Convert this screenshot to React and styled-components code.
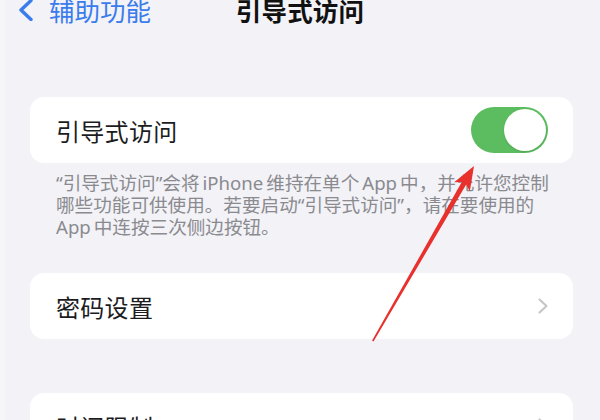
import React from "react";
import styled, { createGlobalStyle } from "styled-components";

const GlobalStyle = createGlobalStyle`
  html, body {
    margin: 0;
    padding: 0;
    background: #f2f2f7;
    overflow: hidden;
  }
  body {
    font-family: "Noto Sans", "Noto Sans CJK SC", sans-serif;
    -webkit-font-smoothing: antialiased;
  }
`;

const Screen = styled.div`
  position: relative;
  width: 600px;
  height: 420px;
  overflow: hidden;
  background: #f2f2f7;
  border-left: 5px solid #f6f6f9;
  box-sizing: border-box;
`;

const NavBar = styled.div`
  display: grid;
  grid-template-columns: 1fr auto 1fr;
  align-items: center;
  height: 22px;
  margin: -3px 0 3px -5px;
  padding: 0 18px;
  font-family: "Noto Sans CJK SC", sans-serif;
  font-size: 25.5px;
  line-height: 1;
`;

const BackLink = styled.a`
  display: flex;
  align-items: center;
  gap: 15px;
  color: #3a7cec;
  text-decoration: none;
  svg {
    flex: none;
  }
`;

const Title = styled.div`
  font-weight: 700;
  color: #111;
  letter-spacing: 0.2px;
`;

const Content = styled.div`
  display: flex;
  flex-direction: column;
  padding: 75px 27px 0 25px;
`;

const Card = styled.div`
  display: flex;
  align-items: center;
  justify-content: space-between;
  height: 66px;
  flex: none;
  padding: 0 25px 0 26px;
  margin-top: ${(p) => p.$gap || 0}px;
  background: #fff;
  border-radius: 14px;
`;

const Label = styled.span`
  font-family: "Noto Sans CJK SC", sans-serif;
  font-size: 24px;
  letter-spacing: 0.3px;
  color: #1c1c1e;
`;

const Switch = styled.span`
  position: relative;
  width: 77px;
  height: 46px;
  border-radius: 23px;
  background: ${(p) => (p.$on ? "#5bbd5f" : "#e5e5ea")};
  &::after {
    content: "";
    position: absolute;
    top: 2px;
    left: ${(p) => (p.$on ? "33px" : "2px")};
    width: 42px;
    height: 42px;
    border-radius: 50%;
    background: #fff;
    box-shadow: 0 1px 2px rgba(0, 0, 0, 0.12);
  }
`;

const Footnote = styled.p`
  margin: 9px 0 0;
  padding: 0 0 0 26px;
  font-size: 18.6px;
  line-height: 22px;
  color: #8a8a8f;
`;

const Line = styled.span`
  display: block;
  white-space: nowrap;
`;

// Latin words inside Chinese text get a little air on both sides
const Latin = styled.span`
  margin: 0 3px;
  ${(p) => p.$lead && "margin-left: 0;"}
`;

const Arrow = styled.svg`
  position: absolute;
  left: -5px;
  top: 0;
  pointer-events: none;
`;

function BackChevron() {
  return (
    <svg width="16" height="22" viewBox="0 0 16 22">
      <path
        d="M13 1.5 L3 11 L13 20.5"
        fill="none"
        stroke="#3a7cec"
        strokeWidth="3.4"
        strokeLinecap="round"
        strokeLinejoin="round"
      />
    </svg>
  );
}

function Disclosure() {
  return (
    <svg width="10" height="16" viewBox="0 0 10 16">
      <path
        d="M1.5 1.5 L8.5 8 L1.5 14.5"
        fill="none"
        stroke="#c4c4c8"
        strokeWidth="2"
        strokeLinecap="round"
        strokeLinejoin="round"
      />
    </svg>
  );
}

export default function App() {
  return (
    <>
      <GlobalStyle />
      <Screen>
        <NavBar>
          <BackLink href="#">
            <BackChevron />
            辅助功能
          </BackLink>
          <Title>引导式访问</Title>
          <span />
        </NavBar>

        <Content>
          <Card>
            <Label>引导式访问</Label>
            <Switch $on />
          </Card>
          <Footnote>
            <Line>
              “引导式访问”会将<Latin>iPhone</Latin>维持在单个<Latin>App</Latin>中，并允许您控制
            </Line>
            <Line>哪些功能可供使用。若要启动“引导式访问”，请在要使用的</Line>
            <Line>
              <Latin $lead>App</Latin>中连按三次侧边按钮。
            </Line>
          </Footnote>

          <Card $gap={35}>
            <Label>密码设置</Label>
            <Disclosure />
          </Card>

          <Card $gap={54}>
            <Label>时间限制</Label>
            <Disclosure />
          </Card>
        </Content>

        {/* red pointer drawn on top of the page */}
        <Arrow width="600" height="420" viewBox="0 0 600 420">
          <polygon
            points="474,166 469.8,191.3 466.2,184.6 373.5,341.4 372.1,340.6 461.8,182 454.2,182.3"
            fill="#e8302c"
          />
        </Arrow>
      </Screen>
    </>
  );
}
